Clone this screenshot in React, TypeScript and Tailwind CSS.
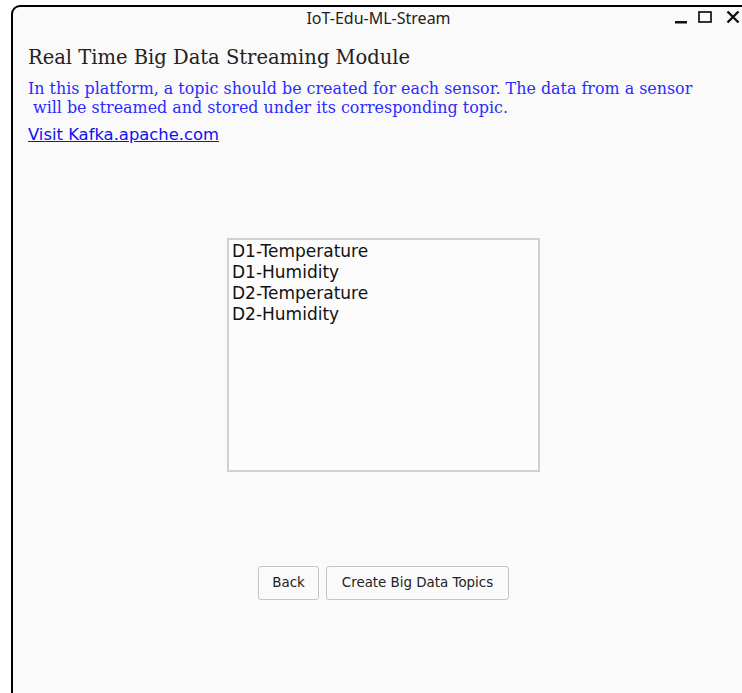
import React from "react";

const topics = ["D1-Temperature", "D1-Humidity", "D2-Temperature", "D2-Humidity"];

export default function App() {
  return (
    <div className="w-[742px] h-[693px] overflow-hidden bg-white pl-[11px] pt-[5px]">
      <div className="w-[735px] h-[700px] border-2 border-black rounded-tl-[9px] bg-[#fafafa] flex flex-col">
        {/* Title bar */}
        <div className="relative h-[21px] flex items-center justify-center">
          <span className="text-[16px] text-[#222] font-['Noto_Sans',sans-serif] leading-none">
            IoT-Edu-ML-Stream
          </span>
          <div className="absolute right-[4px] top-[3px] flex items-center">
            <svg width="14" height="14" viewBox="0 0 14 14">
              <rect x="1" y="11" width="12" height="2.5" fill="#111" />
            </svg>
            <svg width="14" height="14" viewBox="0 0 14 14" className="ml-[10px]">
              <rect x="1" y="2" width="12" height="10" fill="none" stroke="#111" strokeWidth="1.7" />
            </svg>
            <svg width="14" height="14" viewBox="0 0 14 14" className="ml-[14px]">
              <path d="M1.5 1.5 L12.5 12.5 M12.5 1.5 L1.5 12.5" stroke="#111" strokeWidth="2.4" />
            </svg>
          </div>
        </div>

        {/* Header */}
        <div className="pl-[15px] pt-[18px] font-['DejaVu_Serif',serif]">
          <h1 className="text-[19.5px] text-[#222] leading-[24px]">Real Time Big Data Streaming Module</h1>
          <p className="mt-[9px] text-[15.9px] leading-[19px] text-[#2a2aff] whitespace-pre">
            {"In this platform, a topic should be created for each sensor. The data from a sensor\n will be streamed and stored under its corresponding topic."}
          </p>
          <a
            href="#"
            className="block mt-[8px] text-[16.4px] leading-[20px] text-[#1010f0] underline font-['DejaVu_Sans',sans-serif]"
          >
            Visit Kafka.apache.com
          </a>
        </div>

        {/* Topic list */}
        <div className="mt-[93px] ml-[214px] w-[313px] h-[234px] border-2 border-[#d0d0d0] bg-[#fcfcfc] px-[3px] pt-[1px] font-['DejaVu_Sans',sans-serif] text-[17px] leading-[21px] text-[#111]">
          {topics.map((t) => (
            <div key={t}>{t}</div>
          ))}
        </div>

        {/* Actions */}
        <div className="mt-[94px] ml-[245px] flex gap-[7px] font-['DejaVu_Sans',sans-serif] text-[13.4px] text-[#222]">
          <button className="h-[34px] w-[61px] rounded-[3px] border border-[#c4c4c4] bg-[#fafafa]">Back</button>
          <button className="h-[34px] w-[183px] rounded-[3px] border border-[#c4c4c4] bg-[#fafafa]">
            Create Big Data Topics
          </button>
        </div>
      </div>
    </div>
  );
}
